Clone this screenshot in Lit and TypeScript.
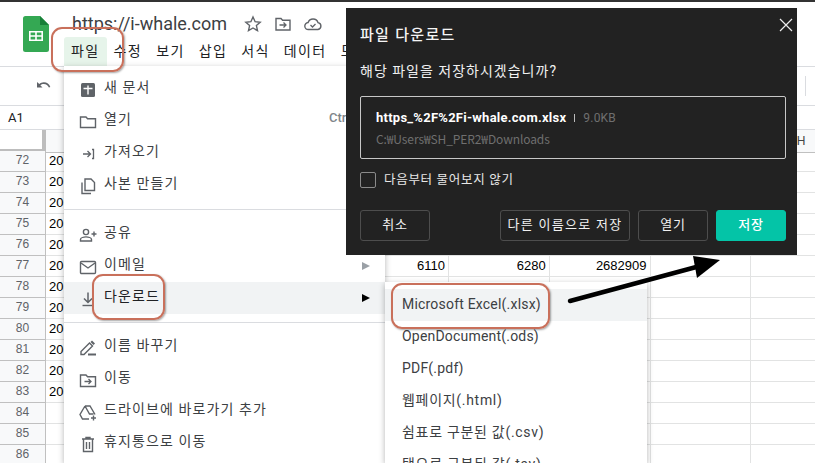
import { LitElement, html, css, svg } from "lit";
import { customElement } from "lit/decorators.js";

const ICONS: Record<string, unknown> = {
  add: svg`<rect x="3" y="3" width="14" height="14" rx="1.5" fill="#5f6368"/><path d="M10 5.5v9M5.5 8.5h9" stroke="#fff" stroke-width="1.4" fill="none"/>`,
  folder: svg`<path d="M3 5h5l1.6 1.8H17.5v8.7H2.500V5z" fill="none" stroke="#5f6368" stroke-width="1.400"/>`,
  imp: svg`<path d="M5 10h7M9.500 7l3 3-3 3" fill="none" stroke="#5f6368" stroke-width="1.300"/><path d="M14 5.500h1.500v9H14" fill="none" stroke="#5f6368" stroke-width="1.300"/>`,
  copy: svg`<path d="M7 3h6l3.500 3.500V14.500H7z" fill="none" stroke="#5f6368" stroke-width="1.400"/><path d="M4 6.500V17.500h9" fill="none" stroke="#5f6368" stroke-width="1.400"/>`,
  share: svg`<circle cx="8" cy="7" r="2.600" fill="none" stroke="#5f6368" stroke-width="1.400"/><path d="M2.500 16v-1.500c0-1.700 3.300-2.600 5.500-2.600s5.500.9 5.500 2.600V16z" fill="none" stroke="#5f6368" stroke-width="1.400"/><path d="M16 6.500v5M13.500 9h5" stroke="#5f6368" stroke-width="1.400" fill="none"/>`,
  mail: svg`<rect x="2.500" y="4.500" width="15" height="12" rx="1" fill="none" stroke="#5f6368" stroke-width="1.400"/><path d="M3 6l7 5 7-5" fill="none" stroke="#5f6368" stroke-width="1.400"/>`,
  down: svg`<path d="M10 3.500v9.500M6 9.500l4 4 4-4" fill="none" stroke="#5f6368" stroke-width="1.500"/><path d="M4.500 16.500h11" stroke="#5f6368" stroke-width="1.400" fill="none"/>`,
  rename: svg`<path d="M3 16.500v-3l8.500-8.500 3 3-8.500 8.500z" fill="none" stroke="#5f6368" stroke-width="1.400"/><path d="M10 15.500h8v2h-8z" fill="#5f6368"/><path d="M12.500 4l1.500-1.500 3 3L15.500 7z" fill="#5f6368"/>`,
  move: svg`<path d="M3 5h5l1.600 1.800H17.500v9.700H2.500V5z" fill="none" stroke="#5f6368" stroke-width="1.400"/><path d="M6.500 11.500h6M10.500 9l2.500 2.500-2.500 2.500" fill="none" stroke="#5f6368" stroke-width="1.300"/>`,
  drive: svg`<path d="M7 4h5l5 8.500M7 4L2 12.500l2.500 4.500H11M7 4l4.500 8h4" fill="none" stroke="#5f6368" stroke-width="1.400"/><path d="M15.500 13.500v5M13 16h5" stroke="#5f6368" stroke-width="1.400" fill="none"/>`,
  trash: svg`<path d="M4 5h12M8 5V3.500h4V5M5.500 5v12.500h9V5M8.500 8v7M11.500 8v7" fill="none" stroke="#5f6368" stroke-width="1.400"/>`,
};

type Item = { icon: string; label: string; hint?: string; arrow?: "dim" | "dark"; active?: boolean };
const SECTION_A: Item[] = [
  { icon: "add", label: "새 문서" },
  { icon: "folder", label: "열기", hint: "Ctrl+O" },
  { icon: "imp", label: "가져오기" },
  { icon: "copy", label: "사본 만들기" },
];
const SECTION_B: Item[] = [
  { icon: "share", label: "공유" },
  { icon: "mail", label: "이메일", arrow: "dim" },
  { icon: "down", label: "다운로드", arrow: "dark", active: true },
];
const SECTION_C: Item[] = [
  { icon: "rename", label: "이름 바꾸기" },
  { icon: "move", label: "이동" },
  { icon: "drive", label: "드라이브에 바로가기 추가" },
  { icon: "trash", label: "휴지통으로 이동" },
];
const FORMATS = [
  { t: "Microsoft Excel(.xlsx)", ko: false },
  { t: "OpenDocument(.ods)", ko: false },
  { t: "PDF(.pdf)", ko: false },
  { t: "웹페이지(.html)", ko: true },
  { t: "쉼표로 구분된 값(.csv)", ko: true },
  { t: "탭으로 구분된 값(.tsv)", ko: true },
];
const TABS = ["수정", "보기", "삽입", "서식", "데이터", "도구"];
const ROWS = Array.from({ length: 15 }, (_, i) => 72 + i);
const COLS = 8;

@customElement("app-root")
export class AppRoot extends LitElement {
  static styles = css`
    :host {
      display: block;
      width: 815px;
      height: 463px;
      position: relative;
      overflow: hidden;
      background: #fff;
      font-family: Roboto, "Noto Sans CJK KR", sans-serif;
      color: #202124;
    }
    .edge { height: 2px; background: #333; }
    .head { height: 64px; display: flex; border-bottom: 1px solid #dadce0; }
    .logo { margin: 14px 0 0 23px; width: 26px; height: 36px; flex: none; }
    .headmain { margin-left: 23px; display: flex; flex-direction: column; }
    .titlerow { display: flex; align-items: center; height: 35px; }
    .title { font-size: 18px; color: #3c4043; width: 171px; margin-top: 9px; line-height: 26px; }
    .ticon { width: 20px; height: 20px; margin: 8px 10px 0 0; flex: none; }
    .tabs { display: flex; margin-left: -8px; height: 29px; }
    .tab { font-size: 14px; line-height: 29px; padding: 0 7px; color: #202124; white-space: nowrap; letter-spacing: 1.400px; }
    .tab.on { background: #e6f4ea; border-radius: 3px 3px 0 0; }
    .tools { height: 38px; border-bottom: 1px solid #dadce0; display: flex; align-items: center; padding-left: 34px; }
    .undo { width: 20px; height: 20px; flex: none; }
    .rule { width: 1px; height: 20px; background: #dadce0; margin-left: 751px; }
    .formula { height: 23px; border-bottom: 1px solid #dadce0; font-size: 13px; line-height: 23px; padding-left: 8px; }

    .sheet { display: grid; grid-template-columns: 46px repeat(8, 100.75px); grid-auto-rows: 21px; font-family: "Liberation Sans", Arial, sans-serif; font-size: 13px; }
    .corner { height: 23px; box-sizing: border-box; background: #fff; border-right: 4px solid #bdbdbd; border-bottom: 4px solid #bdbdbd; }
    .chead { height: 23px; box-sizing: border-box; background: #f8f9fa; border-right: 1px solid #dadce0; border-bottom: 1px solid #c0c0c0; text-align: center; line-height: 22px; font-size: 12px; color: #444; }
    .rhead { background: #f8f9fa; box-sizing: border-box; border-right: 1px solid #c0c0c0; border-bottom: 1px solid #c0c0c0; color: #5f6368; font-size: 12px; text-align: center; line-height: 19px; }
    .cell { box-sizing: border-box; border-right: 1px solid #e2e3e3; border-bottom: 1px solid #e2e3e3; line-height: 20px; padding: 0 3px; color: #000; overflow: hidden; }
    .cell.num { text-align: right; }

    .menu { position: absolute; left: 64px; top: 66px; width: 321px; height: 397px; box-sizing: border-box; background: #fff; padding-top: 7px; box-shadow: 0 2px 6px rgba(0,0,0,.3); }
    .row { height: 32px; display: flex; align-items: center; padding-left: 14px; font-size: 14px; color: #3c4043; position: relative; }
    .row.active { background: #f1f3f4; color: #202124; }
    .row svg { width: 20px; height: 20px; flex: none; margin-top: 1px; }
    .label { margin-left: 6px; margin-top: -6px; letter-spacing: 1.100px; white-space: nowrap; }
    .hint { position: absolute; left: 265px; font-size: 13px; font-weight: 500; color: #80868b; top: 5px; white-space: nowrap; }
    .tri { position: absolute; left: 298px; top: 12px; width: 0; height: 0; border-left: 8px solid #000; border-top: 4px solid transparent; border-bottom: 4px solid transparent; }
    .tri.dim { border-left-color: #9aa0a6; }
    .sep { height: 1px; background: #dadce0; margin: 8px 0; }
    .sub { position: absolute; left: 385px; top: 282px; width: 262px; height: 181px; box-sizing: border-box; background: #fff; padding-top: 7px; overflow: hidden; box-shadow: 0 2px 6px rgba(0,0,0,.3); }
    .subrow { height: 32px; line-height: 30px; padding-left: 17px; font-size: 14px; color: #3c4043; letter-spacing: .2px; white-space: nowrap; }
    .subrow.first { background: #f1f3f4; }
    .subrow.ko { letter-spacing: .7px; }

    .mark { position: absolute; box-sizing: border-box; border: 2px solid #c9705b; border-radius: 11px; box-shadow: 1px 1px 2px rgba(0,0,0,.35); }
    .m1 { left: 51px; top: 27px; width: 73px; height: 45px; }
    .m2 { left: 92px; top: 274px; width: 73px; height: 46px; }
    .m3 { left: 391px; top: 283px; width: 159px; height: 46px; }
    .arrow { position: absolute; left: 560px; top: 250px; width: 170px; height: 60px; }

    .dlg { position: absolute; left: 346px; top: 8px; width: 451px; height: 247px; box-sizing: border-box; background: #222; padding: 17px 11px 14px 14px; color: #f1f1f1; display: flex; flex-direction: column; }
    .dtitle { font-size: 15px; font-weight: 500; line-height: 20px; color: #f5f5f5; letter-spacing: 1.300px; }
    .dq { font-size: 14px; line-height: 20px; margin-top: 16px; letter-spacing: 1px; }
    .close { position: absolute; left: 433px; top: 10px; width: 14px; height: 14px; }
    .box { margin-top: 15px; height: 63px; box-sizing: border-box; border: 1px solid #c8c8c8; border-radius: 2px; padding: 11px 15px; }
    .fline { display: flex; align-items: center; line-height: 20px; }
    .fname { font-size: 13px; font-weight: 700; color: #fff; letter-spacing: .25px; }
    .fsep { width: 1px; height: 8px; background: #bbb; margin: 0 8px; }
    .fsize { font-size: 12px; color: #6f6f6f; letter-spacing: .2px; }
    .fpath { font-size: 12px; color: #6f6f6f; line-height: 18px; margin-top: 2px; font-family: "Noto Sans CJK KR", sans-serif; letter-spacing: -.1px; }
    .check { display: flex; align-items: center; margin-top: 12px; height: 18px; font-size: 12.500px; letter-spacing: .7px; color: #e8e8e8; line-height: 14px; }
    .cb { width: 16px; height: 16px; box-sizing: border-box; border: 1px solid #8a8a8a; border-radius: 2px; margin-right: 8px; }
    .btns { display: flex; margin-top: auto; }
    .btn { height: 31px; box-sizing: border-box; width: 70px; border: 1px solid #4d4d4d; border-radius: 3px; font-size: 13px; line-height: 28px; text-align: center; color: #f1f1f1; white-space: nowrap; letter-spacing: .8px; }
    .btn.wide { width: 130px; margin-left: 70px; margin-right: 8px; letter-spacing: 1.300px; }
    .btn.save { background: #04c4a7; border-color: #04c4a7; margin-left: 8px; font-weight: 500; color: #fff; }
  `;

  private item(it: Item) {
    return html`<div class="row ${it.active ? "active" : ""}">
      <svg viewBox="0 0 20 20">${ICONS[it.icon]}</svg>
      <span class="label">${it.label}</span>
      ${it.hint ? html`<span class="hint">${it.hint}</span>` : ""}
      ${it.arrow ? html`<span class="tri ${it.arrow === "dim" ? "dim" : ""}"></span>` : ""}
    </div>`;
  }

  private cell(row: number, col: number) {
    if (col === 0) return html`<div class="cell">${row <= 83 ? "20" : ""}</div>`;
    if (row === 77 && col === 3) return html`<div class="cell num">6110</div>`;
    if (row === 77 && col === 4) return html`<div class="cell num">6280</div>`;
    if (row === 77 && col === 5) return html`<div class="cell num">2682909</div>`;
    return html`<div class="cell"></div>`;
  }

  render() {
    return html`
      <div class="edge"></div>
      <div class="head">
        <svg class="logo" viewBox="0 0 26 36">
          <path d="M2.500 0H17l9 9v24.500a2.500 2.500 0 0 1-2.500 2.500h-21A2.500 2.500 0 0 1 0 33.500v-31A2.500 2.500 0 0 1 2.500 0z" fill="#34a853"/>
          <path d="M17 0l9 9h-9z" fill="#188038"/>
          <path d="M6 15h14v10H6z M7.600 16.600v2.600h4.600v-2.600z M13.800 16.600v2.600h4.600v-2.600z M7.600 20.800v2.600h4.600v-2.600z M13.800 20.800v2.600h4.600v-2.600z" fill="#fff" fill-rule="evenodd"/>
        </svg>
        <div class="headmain">
          <div class="titlerow">
            <span class="title">https://i-whale.com</span>
            <svg class="ticon" viewBox="0 0 20 20"><path d="M10 3l2.100 4.700 5.100.5-3.800 3.400 1.100 5L10 14l-4.500 2.600 1.100-5L2.800 8.200l5.100-.5z" fill="none" stroke="#5f6368" stroke-width="1.400"/></svg>
            <svg class="ticon" viewBox="0 0 20 20"><path d="M3 4.500h5l1.600 1.800H17v9.700H3z" fill="none" stroke="#5f6368" stroke-width="1.400"/><path d="M6.500 11h6M10.500 8.500l2.500 2.500-2.500 2.500" fill="none" stroke="#5f6368" stroke-width="1.300"/></svg>
            <svg class="ticon" viewBox="0 0 20 20"><path d="M5.500 15.500a3.500 3.500 0 0 1-.4-7A5.200 5.200 0 0 1 15 8.600a3.500 3.500 0 0 1 0 6.900z" fill="none" stroke="#5f6368" stroke-width="1.400"/><path d="M7.500 11l2 2 3-3" fill="none" stroke="#5f6368" stroke-width="1.300"/></svg>
          </div>
          <div class="tabs">
            <div class="tab on">파일</div>
            ${TABS.map((t) => html`<div class="tab">${t}</div>`)}
          </div>
        </div>
      </div>
      <div class="tools">
        <svg class="undo" viewBox="0 0 20 20"><path d="M3 6v5.500h5.500L6.300 9.300c1-.8 2.200-1.300 3.500-1.300 2.400 0 4.400 1.500 5.100 3.600l1.400-.5C15.400 8.200 12.900 6.300 9.800 6.300c-1.700 0-3.300.7-4.500 1.800z" fill="#5f6368"/></svg>
        <div class="rule"></div>
      </div>
      <div class="formula">A1</div>
      <div class="sheet">
        <div class="corner"></div>
        ${Array.from({ length: COLS }, (_, i) => html`<div class="chead">${i === COLS - 1 ? "H" : ""}</div>`)}
        ${ROWS.map(
          (r) => html`<div class="rhead">${r}</div>
            ${Array.from({ length: COLS }, (_, c) => this.cell(r, c))}`
        )}
      </div>

      <div class="menu">
        ${SECTION_A.map((i) => this.item(i))}
        <div class="sep"></div>
        ${SECTION_B.map((i) => this.item(i))}
        <div class="sep"></div>
        ${SECTION_C.map((i) => this.item(i))}
      </div>
      <div class="sub">
        ${FORMATS.map((f, i) => html`<div class="subrow ${i === 0 ? "first" : ""} ${f.ko ? "ko" : ""}">${f.t}</div>`)}
      </div>

      <div class="mark m1"></div>
      <div class="mark m2"></div>
      <div class="mark m3"></div>

      <svg class="arrow" viewBox="0 0 170 60">
        <path d="M10 51L140 16" stroke="#000" stroke-width="4.500" stroke-linecap="round" fill="none"/>
        <path d="M133 6L160 10L137 28z" fill="#000"/>
      </svg>

      <div class="dlg">
        <div class="dtitle">파일 다운로드</div>
        <div class="dq">해당 파일을 저장하시겠습니까?</div>
        <svg class="close" viewBox="0 0 14 14"><path d="M1 1l12 12M13 1L1 13" stroke="#eee" stroke-width="1.200" fill="none"/></svg>
        <div class="box">
          <div class="fline">
            <span class="fname">https_%2F%2Fi-whale.com.xlsx</span>
            <span class="fsep"></span>
            <span class="fsize">9.0KB</span>
          </div>
          <div class="fpath">C:₩Users₩SH_PER2₩Downloads</div>
        </div>
        <div class="check"><span class="cb"></span>다음부터 물어보지 않기</div>
        <div class="btns">
          <div class="btn">취소</div>
          <div class="btn wide">다른 이름으로 저장</div>
          <div class="btn">열기</div>
          <div class="btn save">저장</div>
        </div>
      </div>
    `;
  }
}
